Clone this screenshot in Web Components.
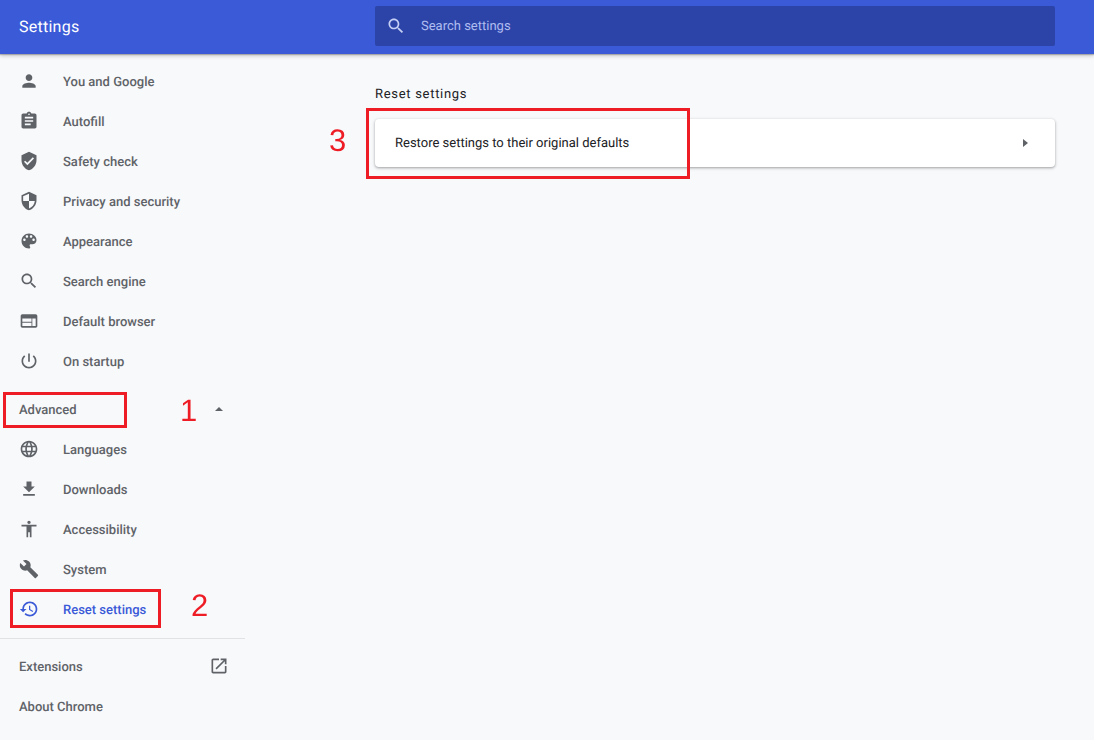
<!DOCTYPE html>
<html lang="en">
<head>
<meta charset="utf-8">
<title>Settings</title>
<style>
  html, body { margin: 0; height: 100%; overflow: hidden; }
  body { background: #f8f9fb; font-family: Roboto, "Liberation Sans", sans-serif; text-rendering: geometricPrecision; }
</style>
</head>
<body>
<settings-app>
  <settings-header slot="header" title="Settings" placeholder="Search settings"></settings-header>
  <settings-nav slot="nav">
    <nav-item icon="person">You and Google</nav-item>
    <nav-item icon="assignment">Autofill</nav-item>
    <nav-item icon="verified">Safety check</nav-item>
    <nav-item icon="security">Privacy and security</nav-item>
    <nav-item icon="palette">Appearance</nav-item>
    <nav-item icon="search">Search engine</nav-item>
    <nav-item icon="web">Default browser</nav-item>
    <nav-item icon="power">On startup</nav-item>
    <nav-section>Advanced</nav-section>
    <nav-item icon="language">Languages</nav-item>
    <nav-item icon="download">Downloads</nav-item>
    <nav-item icon="accessibility">Accessibility</nav-item>
    <nav-item icon="build">System</nav-item>
    <nav-item icon="restore" selected>Reset settings</nav-item>
    <nav-divider></nav-divider>
    <nav-link external>Extensions</nav-link>
    <nav-link>About Chrome</nav-link>
  </settings-nav>
  <settings-page slot="main" heading="Reset settings">
    <settings-row>Restore settings to their original defaults</settings-row>
  </settings-page>
  <call-out slot="overlay" label="1" style="left:3px;top:392px;width:124px;height:36px" num="left:180px;top:393px"></call-out>
  <call-out slot="overlay" label="2" style="left:10px;top:589px;width:151px;height:39px" num="left:191px;top:588px"></call-out>
  <call-out slot="overlay" label="3" style="left:366px;top:108px;width:324px;height:71px" num="left:329px;top:123px"></call-out>
</settings-app>

<script>
// Material icon paths used by the nav
const ICONS = {
  person: 'M12 12c2.21 0 4-1.79 4-4s-1.79-4-4-4-4 1.79-4 4 1.79 4 4 4zm0 2c-2.67 0-8 1.34-8 4v2h16v-2c0-2.66-5.33-4-8-4z',
  assignment: 'M19 3h-4.18C14.4 1.84 13.3 1 12 1c-1.3 0-2.4.84-2.82 2H5c-1.1 0-2 .9-2 2v14c0 1.1.9 2 2 2h14c1.1 0 2-.9 2-2V5c0-1.1-.9-2-2-2zm-7 0c.55 0 1 .45 1 1s-.45 1-1 1-1-.45-1-1 .45-1 1-1zm2 14H7v-2h7v2zm3-4H7v-2h10v2zm0-4H7V7h10v2z',
  verified: 'M12 1L3 5v6c0 5.55 3.84 10.74 9 12 5.16-1.26 9-6.45 9-12V5l-9-4zm-2 16l-4-4 1.41-1.41L10 14.17l6.59-6.59L18 9l-8 8z',
  security: 'M12 1L3 5v6c0 5.55 3.84 10.74 9 12 5.16-1.26 9-6.45 9-12V5l-9-4zm0 10.99h7c-.53 4.12-3.28 7.79-7 8.94V12H5V6.3l7-3.11v8.8z',
  palette: 'M12 3c-4.97 0-9 4.03-9 9s4.03 9 9 9c.83 0 1.5-.67 1.5-1.5 0-.39-.15-.74-.39-1.01-.23-.26-.38-.61-.38-.99 0-.83.67-1.5 1.5-1.5H16c2.76 0 5-2.24 5-5 0-4.42-4.03-8-9-8zm-5.5 9c-.83 0-1.5-.67-1.5-1.5S5.67 9 6.5 9 8 9.67 8 10.5 7.33 12 6.5 12zm3-4C8.67 8 8 7.33 8 6.5S8.67 5 9.5 5s1.5.67 1.5 1.5S10.33 8 9.5 8zm5 0c-.83 0-1.5-.67-1.5-1.5S13.67 5 14.5 5s1.5.67 1.5 1.5S15.33 8 14.5 8zm3 4c-.83 0-1.5-.67-1.5-1.5S16.67 9 17.5 9s1.5.67 1.5 1.5-.67 1.5-1.5 1.5z',
  search: 'M15.5 14h-.79l-.28-.27C15.41 12.59 16 11.11 16 9.5 16 5.91 13.09 3 9.5 3S3 5.91 3 9.5 5.91 16 9.5 16c1.61 0 3.09-.59 4.23-1.57l.27.28v.79l5 4.99L20.49 19l-4.99-5zm-6 0C7.01 14 5 11.99 5 9.5S7.01 5 9.5 5 14 7.01 14 9.5 11.99 14 9.5 14z',
  web: 'M20 4H4c-1.1 0-1.99.9-1.99 2L2 18c0 1.1.9 2 2 2h16c1.1 0 2-.9 2-2V6c0-1.1-.9-2-2-2zm-5 14H4v-4h11v4zm0-5H4V9h11v4zm5 5h-4V9h4v9z',
  power: 'M13 3h-2v10h2V3zm4.83 2.17l-1.42 1.42C17.99 7.86 19 9.81 19 12c0 3.87-3.13 7-7 7s-7-3.13-7-7c0-2.19 1.01-4.14 2.58-5.42L6.17 5.17C4.23 6.82 3 9.26 3 12c0 4.97 4.03 9 9 9s9-4.03 9-9c0-2.74-1.23-5.18-3.17-6.83z',
  language: 'M11.99 2C6.47 2 2 6.48 2 12s4.47 10 9.99 10C17.52 22 22 17.52 22 12S17.52 2 11.99 2zm6.93 6h-2.95c-.32-1.25-.78-2.45-1.38-3.56 1.84.63 3.37 1.91 4.33 3.56zM12 4.04c.83 1.2 1.48 2.53 1.91 3.96h-3.82c.43-1.43 1.08-2.76 1.91-3.96zM4.26 14C4.1 13.36 4 12.69 4 12s.1-1.36.26-2h3.38c-.08.66-.14 1.32-.14 2 0 .68.06 1.34.14 2H4.26zm.82 2h2.95c.32 1.25.78 2.45 1.38 3.56-1.84-.63-3.37-1.9-4.33-3.56zm2.95-8H5.08c.96-1.66 2.49-2.93 4.33-3.56C8.81 5.55 8.35 6.75 8.03 8zM12 19.96c-.83-1.2-1.48-2.53-1.91-3.96h3.82c-.43 1.43-1.08 2.76-1.91 3.96zM14.34 14H9.66c-.09-.66-.16-1.32-.16-2 0-.68.07-1.35.16-2h4.68c.09.65.16 1.32.16 2 0 .68-.07 1.34-.16 2zm.25 5.56c.6-1.11 1.06-2.31 1.38-3.56h2.95c-.96 1.65-2.49 2.93-4.33 3.56zM16.36 14c.08-.66.14-1.32.14-2 0-.68-.06-1.34-.14-2h3.38c.16.64.26 1.31.26 2s-.1 1.36-.26 2h-3.38z',
  download: 'M19 9h-4V3H9v6H5l7 7 7-7zM5 18v2h14v-2H5z',
  accessibility: 'M12 2c1.1 0 2 .9 2 2s-.9 2-2 2-2-.9-2-2 .9-2 2-2zm9 7h-6v13h-2v-6h-2v6H9V9H3V7h18v2z',
  build: 'M22.7 19l-9.1-9.1c.9-2.3.4-5-1.5-6.9-2-2-5-2.4-7.4-1.3L9 6 6 9 1.6 4.7C.4 7.1.9 10.1 2.9 12.1c1.9 1.9 4.6 2.4 6.9 1.5l9.1 9.1c.4.4 1 .4 1.4 0l2.3-2.3c.5-.4.5-1.1.1-1.4z',
  restore: 'M13 3c-4.97 0-9 4.03-9 9H1l3.89 3.89.07.14L9 12H6c0-3.87 3.13-7 7-7s7 3.13 7 7-3.13 7-7 7c-1.93 0-3.68-.79-4.94-2.06l-1.42 1.42C8.27 19.99 10.51 21 13 21c4.97 0 9-4.03 9-9s-4.03-9-9-9zm-1 5v5l4.28 2.54.72-1.21-3.5-2.08V8H12z',
  open: 'M19 19H5V5h7V3H5c-1.11 0-2 .9-2 2v14c0 1.1.89 2 2 2h14c1.1 0 2-.9 2-2v-7h-2v7zM14 3v2h3.59l-9.83 9.83 1.41 1.41L19 6.41V10h2V3h-7z'
};

const svgIcon = (name) =>
  `<svg viewBox="0 0 24 24" width="20" height="20" fill="currentColor" aria-hidden="true"><path d="${ICONS[name]}"/></svg>`;

class SettingsApp extends HTMLElement {
  constructor() {
    super();
    this.attachShadow({ mode: 'open' });
    this.shadowRoot.innerHTML = `
      <style>
        :host { display: block; position: relative; width: 1094px; height: 740px; overflow: hidden; }
        .body { display: grid; grid-template-columns: 245px 1fr; }
      </style>
      <slot name="header"></slot>
      <div class="body">
        <slot name="nav"></slot>
        <slot name="main"></slot>
      </div>
      <slot name="overlay"></slot>
    `;
  }
}

class SettingsHeader extends HTMLElement {
  constructor() {
    super();
    this.attachShadow({ mode: 'open' });
  }

  connectedCallback() {
    const title = this.getAttribute('title') || '';
    const placeholder = this.getAttribute('placeholder') || '';
    this.shadowRoot.innerHTML = `
      <style>
        :host {
          display: flex; align-items: center; height: 54px; padding-right: 39px;
          background: #3a5ad8; position: relative; z-index: 1;
          box-shadow: 0 1px 1px rgba(0,0,0,.2), 0 2px 4px rgba(0,0,0,.2);
        }
        h1 { margin: -1px 0 0 19px; width: 356px; font: 400 16px Roboto, sans-serif; color: #fff; letter-spacing: .25px; }
        .search {
          flex: 1; display: flex; align-items: center; height: 40px; margin-top: -2px; border-radius: 2px;
          background: #2c44a8; color: #b0bdf0; font: 400 13px Roboto, sans-serif;
        }
        svg { margin: 0 15px 0 11px; color: #c5cff5; }
      </style>
      <h1>${title}</h1>
      <div class="search">${svgIcon('search')}<span>${placeholder}</span></div>
    `;
  }
}

class SettingsNav extends HTMLElement {
  constructor() {
    super();
    this.attachShadow({ mode: 'open' });
    this.shadowRoot.innerHTML = `
      <style>
        :host { display: block; padding-top: 7px; }
      </style>
      <slot></slot>
    `;
  }
}

class NavItem extends HTMLElement {
  constructor() {
    super();
    this.attachShadow({ mode: 'open' });
  }

  connectedCallback() {
    this.shadowRoot.innerHTML = `
      <style>
        :host {
          display: flex; align-items: center; height: 40px; padding-left: 19px; gap: 24px;
          font: 500 13px Roboto, sans-serif; color: #5f6368;
        }
        :host([selected]) { color: #3a5ad8; }
        svg { flex: none; }
        span { padding-top: 2px; }
      </style>
      ${svgIcon(this.getAttribute('icon'))}
      <span><slot></slot></span>
    `;
  }
}

class NavSection extends HTMLElement {
  constructor() {
    super();
    this.attachShadow({ mode: 'open' });
    this.shadowRoot.innerHTML = `
      <style>
        :host {
          display: flex; align-items: center; justify-content: space-between;
          height: 40px; margin-top: 8px; padding: 0 22px 0 19px;
          font: 500 13px Roboto, sans-serif; color: #5f6368;
        }
        span { padding-top: 2px; }
        i { width: 0; height: 0; border: 4.5px solid transparent; border-top: 0; border-bottom: 4px solid #5f6368; }
      </style>
      <span><slot></slot></span><i></i>
    `;
  }
}

class NavDivider extends HTMLElement {
  constructor() {
    super();
    this.attachShadow({ mode: 'open' });
    this.shadowRoot.innerHTML = `
      <style>
        :host { display: block; height: 1px; margin: 9px 0 7px; background: #e0e2e6; }
      </style>
    `;
  }
}

class NavLink extends HTMLElement {
  constructor() {
    super();
    this.attachShadow({ mode: 'open' });
  }

  connectedCallback() {
    this.shadowRoot.innerHTML = `
      <style>
        :host {
          display: flex; align-items: center; justify-content: space-between;
          height: 40px; padding: 0 16px 0 19px;
          font: 500 13px Roboto, sans-serif; color: #5f6368;
        }
        span { padding-top: 2px; }
      </style>
      <span><slot></slot></span>
      ${this.hasAttribute('external') ? svgIcon('open') : ''}
    `;
  }
}

class SettingsPage extends HTMLElement {
  constructor() {
    super();
    this.attachShadow({ mode: 'open' });
  }

  connectedCallback() {
    this.shadowRoot.innerHTML = `
      <style>
        :host { display: block; padding: 32px 39px 0 130px; }
        h2 { margin: 0 0 15px; font: 400 13px/18px Roboto, sans-serif; color: #202124; letter-spacing: .7px; }
      </style>
      <h2>${this.getAttribute('heading')}</h2>
      <slot></slot>
    `;
  }
}

class SettingsRow extends HTMLElement {
  constructor() {
    super();
    this.attachShadow({ mode: 'open' });
    this.shadowRoot.innerHTML = `
      <style>
        :host {
          display: flex; align-items: center; justify-content: space-between; box-sizing: border-box;
          height: 48px; padding: 0 27px 0 20px; background: #fff; border-radius: 4px;
          font: 400 13px Roboto, sans-serif; color: #202124;
          box-shadow: 0 1px 2px rgba(60,64,67,.3), 0 1px 3px 1px rgba(60,64,67,.15);
        }
        i { width: 0; height: 0; border: 4.5px solid transparent; border-right: 0; border-left: 5px solid #5f6368; }
      </style>
      <slot></slot><i></i>
    `;
  }
}

// Red annotation painted over the screenshot: a frame and its step number
class CallOut extends HTMLElement {
  constructor() {
    super();
    this.attachShadow({ mode: 'open' });
  }

  connectedCallback() {
    this.shadowRoot.innerHTML = `
      <style>
        :host { display: block; position: absolute; z-index: 2; box-sizing: border-box; border: 3px solid #ee1c25; }
        span {
          position: fixed; ${this.getAttribute('num')};
          font: 400 31px/36px "Liberation Sans", sans-serif; color: #ee1c25;
        }
      </style>
      <span>${this.getAttribute('label')}</span>
    `;
  }
}

customElements.define('settings-app', SettingsApp);
customElements.define('settings-header', SettingsHeader);
customElements.define('settings-nav', SettingsNav);
customElements.define('nav-item', NavItem);
customElements.define('nav-section', NavSection);
customElements.define('nav-divider', NavDivider);
customElements.define('nav-link', NavLink);
customElements.define('settings-page', SettingsPage);
customElements.define('settings-row', SettingsRow);
customElements.define('call-out', CallOut);
</script>
</body>
</html>
